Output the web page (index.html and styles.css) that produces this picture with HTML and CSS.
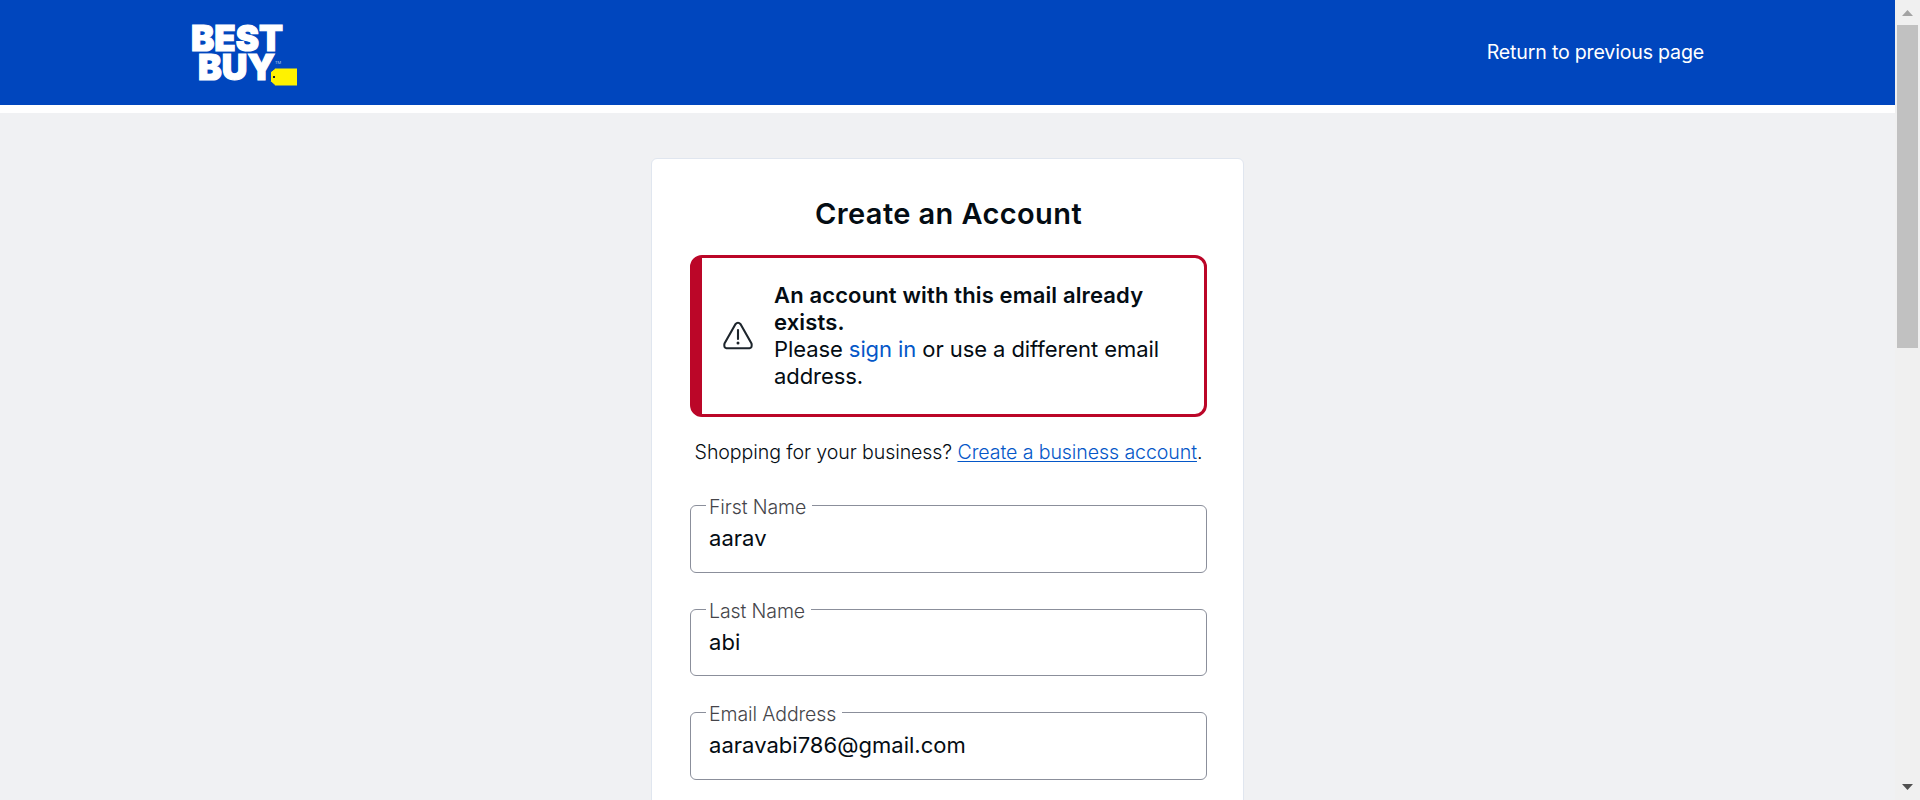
FILE: index.html
```
<!DOCTYPE html>
<html lang="en">
<head>
<meta charset="utf-8">
<title>Create an Account</title>
<link rel="stylesheet" href="styles.css">
</head>
<body>
<div class="page">
  <header class="header">
    <svg class="logo" width="112" height="72" viewBox="0 0 112 72" role="img" aria-label="Best Buy">
      <text class="logo-word" x="2" y="34.700" textLength="92" lengthAdjust="spacingAndGlyphs">BEST</text>
      <text class="logo-word" x="9" y="64.300" textLength="77" lengthAdjust="spacingAndGlyphs">BUY</text>
      <text class="logo-tm" x="86" y="47.500">TM</text>
      <path fill="#fff200" stroke="#0046be" d="M86.500 52h22v18h-22L81.500 65.500V56z"/>
      <rect x="84" y="60" width="2" height="2" fill="#1d252c"/>
    </svg>
    <a class="return"><span>Return to previous page</span></a>
  </header>
  <main class="main">
    <section class="card">
      <h1 class="title">Create an Account</h1>
      <div class="alert">
        <svg class="warn" width="32" height="30" viewBox="0 0 32 30" fill="none" stroke="#1d252c" stroke-width="2.100" stroke-linecap="round" stroke-linejoin="round">
          <path d="M13.400 3.200Q16 .2 18.600 3.200L29.500 22.600Q30.500 26.800 27.500 27.300H4.500Q1.500 26.800 2.500 22.600Z"/>
          <path d="M16 9v9"/>
          <circle cx="16" cy="22" r="1.500" fill="#1d252c" stroke="none"/>
        </svg>
        <div class="alert-text">
          <strong class="alert-title">An account with this email already<br>exists.</strong>
          <p class="alert-body">Please <a class="signin">sign in</a> or use a different email<br>address.</p>
        </div>
      </div>
      <p class="business"><span>Shopping for your business?</span> <a class="link">Create a business account</a>.</p>
      <form class="form">
        <div class="field"><label class="label">First Name</label><div class="value">aarav</div></div>
        <div class="field"><label class="label">Last Name</label><div class="value">abi</div></div>
        <div class="field"><label class="label">Email Address</label><div class="value">aaravabi786@gmail.com</div></div>
      </form>
    </section>
  </main>
</div>
<aside class="scrollbar">
  <svg class="arrow" width="11" height="6" viewBox="0 0 11 6"><path fill="#a3a3a3" d="M5.500 0L11 6H0z"/></svg>
  <div class="thumb"></div>
  <svg class="arrow arrow-down" width="11" height="6" viewBox="0 0 11 6"><path fill="#505050" d="M0 0h11L5.500 6z"/></svg>
</aside>
</body>
</html>
```
FILE: styles.css
```
* { box-sizing: border-box; }
body {
  margin: 0;
  height: 800px;
  display: flex;
  overflow: hidden;
  font-family: Inter, "Liberation Sans", sans-serif;
  color: #040c13;
}
p, h1 { margin: 0; }
.page { width: 1895px; height: 800px; overflow: hidden; background: #f0f1f3; }
.header {
  height: 113px;
  padding: 16px 191px 0 189px;
  display: flex;
  justify-content: space-between;
  background: #0046be;
  border-bottom: 8px solid #fff;
}
.logo { display: block; }
.logo-word { font: 900 36px Inter, sans-serif; fill: #fff; stroke: #fff; stroke-width: 1.200px; }
.logo-tm { font: 4px Inter, sans-serif; fill: #b3c8ec; }
.return { margin-top: 21px; height: 30px; line-height: 30px; font-size: 19.600px; letter-spacing: -0.190px; color: #fff; white-space: nowrap; }
.main { display: flex; justify-content: center; padding: 45px 0 0 0; }
.card {
  width: 593px;
  height: 720px;
  padding: 35px 36px 0 38px;
  background: #fff;
  border: 1px solid #e0e6ef;
  border-radius: 6px;
}
.title { height: 40px; line-height: 40px; font-size: 29px; font-weight: 600; text-align: center; letter-spacing: 0.400px; white-space: nowrap; }
.alert {
  margin-top: 21px;
  height: 162px;
  display: flex;
  align-items: center;
  padding-left: 20px;
  border: 3px solid #bb0628;
  border-left-width: 12px;
  border-radius: 12px;
}
.warn { flex: none; margin-right: 20px; }
.alert-text { font-size: 22px; line-height: 27px; white-space: nowrap; }
.alert-title { display: block; font-weight: 600; letter-spacing: 0.140px; }
.alert-body { letter-spacing: -0.080px; }
.signin { color: #0457c8; }
.business { margin-top: 20px; height: 30px; line-height: 30px; font-size: 19.600px; font-weight: 300; letter-spacing: -0.100px; text-align: center; white-space: nowrap; }
.link { color: #0457c8; text-decoration: underline; text-underline-offset: 2px; text-decoration-thickness: 1px; }
.form { margin-top: 38px; display: flex; flex-direction: column; gap: 36px; }
.field { height: 67.500px; padding-left: 15px; border: 1px solid #8b8f9b; border-radius: 6px; }
.label { display: block; width: max-content; margin-top: -13px; padding: 0 6px 0 3px; height: 28px; line-height: 28px; font-size: 19.500px; font-weight: 300; letter-spacing: -0.100px; color: #45454a; background: #fff; }
.value { padding-left: 3px; height: 34px; line-height: 35px; font-size: 22px; letter-spacing: 0.030px; }
.scrollbar { width: 25px; height: 800px; padding: 10px 0; display: flex; flex-direction: column; align-items: center; background: #f0f0f0; }
.arrow { flex: none; }
.thumb { width: 21px; height: 323px; margin-top: 9px; background: #c1c1c1; }
.arrow-down { margin-top: auto; }
```
